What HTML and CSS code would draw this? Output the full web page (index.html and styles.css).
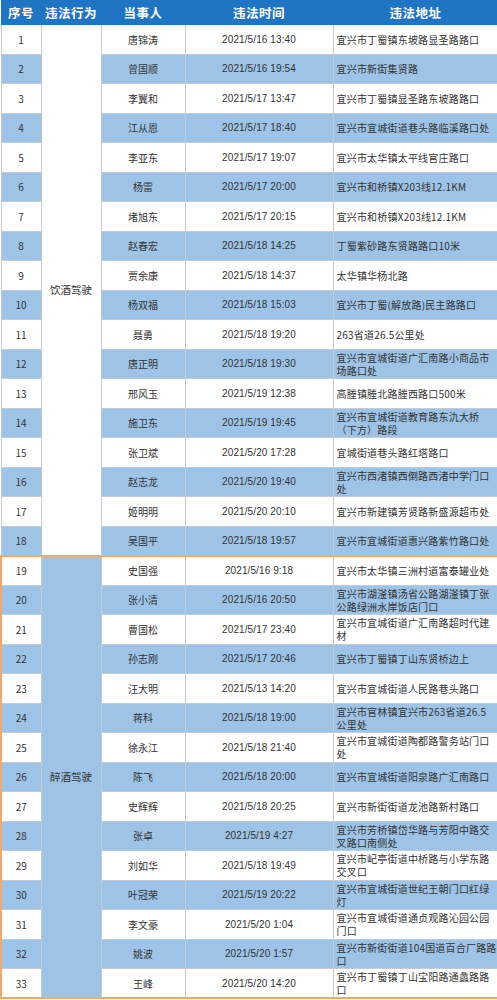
FILE: index.html
```html
<!DOCTYPE html>
<html lang="zh-CN">
<head>
<meta charset="utf-8">
<title>违法人员名单</title>
<link rel="stylesheet" href="styles.css">
</head>
<body>
<table class="sheet">
  <colgroup>
    <col class="c-no"><col class="c-type"><col class="c-name"><col class="c-time"><col class="c-addr">
  </colgroup>
  <thead>
    <tr class="head"><th>序号</th><th>违法行为</th><th>当事人</th><th>违法时间</th><th>违法地址</th></tr>
  </thead>
  <tbody class="group g1">
    <tr class="w"><td>1</td><td class="type" rowspan="18">饮酒驾驶</td><td>唐锦涛</td><td class="time">2021/5/16 13:40</td><td class="addr">宜兴市丁蜀镇东坡路显圣路路口</td></tr>
    <tr class="b"><td>2</td><td>曾国顺</td><td class="time">2021/5/16 19:54</td><td class="addr">宜兴市新街集贤路</td></tr>
    <tr class="w"><td>3</td><td>李翼和</td><td class="time">2021/5/17 13:47</td><td class="addr">宜兴市丁蜀镇显圣路东坡路路口</td></tr>
    <tr class="b"><td>4</td><td>江从恩</td><td class="time">2021/5/17 18:40</td><td class="addr">宜兴市宜城街道巷头路临溪路口处</td></tr>
    <tr class="w"><td>5</td><td>李亚东</td><td class="time">2021/5/17 19:07</td><td class="addr">宜兴市太华镇太平线官庄路口</td></tr>
    <tr class="b"><td>6</td><td>杨雷</td><td class="time">2021/5/17 20:00</td><td class="addr">宜兴市和桥镇X203线12.1KM</td></tr>
    <tr class="w"><td>7</td><td>堵旭东</td><td class="time">2021/5/17 20:15</td><td class="addr">宜兴市和桥镇X203线12.1KM</td></tr>
    <tr class="b"><td>8</td><td>赵春宏</td><td class="time">2021/5/18 14:25</td><td class="addr">丁蜀紫砂路东贤路路口10米</td></tr>
    <tr class="w"><td>9</td><td>贾余康</td><td class="time">2021/5/18 14:37</td><td class="addr">太华镇华杨北路</td></tr>
    <tr class="b"><td>10</td><td>杨双福</td><td class="time">2021/5/18 15:03</td><td class="addr">宜兴市丁蜀(解放路)民主路路口</td></tr>
    <tr class="w"><td>11</td><td>聂勇</td><td class="time">2021/5/18 19:20</td><td class="addr">263省道26.5公里处</td></tr>
    <tr class="b"><td>12</td><td>唐正明</td><td class="time">2021/5/18 19:30</td><td class="addr">宜兴市宜城街道广汇南路小商品市<br>场路口处</td></tr>
    <tr class="w"><td>13</td><td>邢风玉</td><td class="time">2021/5/19 12:38</td><td class="addr">高塍镇塍北路塍西路口500米</td></tr>
    <tr class="b"><td>14</td><td>施卫东</td><td class="time">2021/5/19 19:45</td><td class="addr">宜兴市宜城街道教育路东氿大桥<br>（下方）路段</td></tr>
    <tr class="w"><td>15</td><td>张卫斌</td><td class="time">2021/5/20 17:28</td><td class="addr">宜城街道巷头路红塔路口</td></tr>
    <tr class="b"><td>16</td><td>赵志龙</td><td class="time">2021/5/20 19:40</td><td class="addr">宜兴市西渚镇西倒路西渚中学门口<br>处</td></tr>
    <tr class="w"><td>17</td><td>姬明明</td><td class="time">2021/5/20 20:10</td><td class="addr">宜兴市新建镇芳贤路新盛源超市处</td></tr>
    <tr class="b"><td>18</td><td>吴国平</td><td class="time">2021/5/18 19:57</td><td class="addr">宜兴市宜城街道惠兴路紫竹路口处</td></tr>
  </tbody>
  <tbody class="group g2">
    <tr class="w"><td>19</td><td class="type" rowspan="15">醉酒驾驶</td><td>史国强</td><td class="time">2021/5/16 9:18</td><td class="addr">宜兴市太华镇三洲村道富泰罐业处</td></tr>
    <tr class="b"><td>20</td><td>张小清</td><td class="time">2021/5/16 20:50</td><td class="addr">宜兴市湖滏镇汤省公路湖滏镇丁张<br>公路绿洲水岸饭店门口</td></tr>
    <tr class="w"><td>21</td><td>曹国松</td><td class="time">2021/5/17 23:40</td><td class="addr">宜兴市宜城街道广汇南路超时代建<br>材</td></tr>
    <tr class="b"><td>22</td><td>孙志刚</td><td class="time">2021/5/17 20:46</td><td class="addr">宜兴市丁蜀镇丁山东贤桥边上</td></tr>
    <tr class="w"><td>23</td><td>汪大明</td><td class="time">2021/5/13 14:20</td><td class="addr">宜兴市宜城街道人民路巷头路口</td></tr>
    <tr class="b"><td>24</td><td>蒋科</td><td class="time">2021/5/18 19:00</td><td class="addr">宜兴市官林镇宜兴市263省道26.5<br>公里处</td></tr>
    <tr class="w"><td>25</td><td>徐永江</td><td class="time">2021/5/18 21:40</td><td class="addr">宜兴市宜城街道陶都路警务站门口<br>处</td></tr>
    <tr class="b"><td>26</td><td>陈飞</td><td class="time">2021/5/18 20:00</td><td class="addr">宜兴市宜城街道阳泉路广汇南路口</td></tr>
    <tr class="w"><td>27</td><td>史辉辉</td><td class="time">2021/5/18 20:25</td><td class="addr">宜兴市新街街道龙池路新村路口</td></tr>
    <tr class="b"><td>28</td><td>张卓</td><td class="time">2021/5/19 4:27</td><td class="addr">宜兴市芳桥镇岱华路与芳阳中路交<br>叉路口南侧处</td></tr>
    <tr class="w"><td>29</td><td>刘如华</td><td class="time">2021/5/18 19:49</td><td class="addr">宜兴市屺亭街道中桥路与小学东路<br>交叉口</td></tr>
    <tr class="b"><td>30</td><td>叶冠荣</td><td class="time">2021/5/19 20:22</td><td class="addr">宜兴市宜城街道世纪王朝门口红绿<br>灯</td></tr>
    <tr class="w"><td>31</td><td>李文豪</td><td class="time">2021/5/20 1:04</td><td class="addr">宜兴市宜城街道通贞观路沁园公园<br>门口</td></tr>
    <tr class="b"><td>32</td><td>姚波</td><td class="time">2021/5/20 1:57</td><td class="addr">宜兴市新街街道104国道百合厂路路<br>口</td></tr>
    <tr class="w"><td>33</td><td>王峰</td><td class="time">2021/5/20 14:20</td><td class="addr">宜兴市丁蜀镇丁山宝阳路通蠡路路<br>口</td></tr>
  </tbody>
</table>
</body>
</html>
```
FILE: styles.css
```css
html, body {
  margin: 0;
  padding: 0;
  background: #ffffff;
}

.sheet {
  width: 497px;
  table-layout: fixed;
  border-collapse: collapse;
  font-family: "Noto Sans CJK SC", "Liberation Sans", sans-serif;
  font-size: 10px;
  color: #333333;
}

.c-no { width: 40px; }
.c-type { width: 60px; }
.c-name { width: 84px; }
.c-time { width: 148px; }
.c-addr { width: 165px; }

.head {
  height: 24px;
  background: #1f74c4;
}

.head th {
  color: #ffffff;
  font-size: 12.5px;
  font-weight: 700;
  letter-spacing: 0.5px;
  padding: 0;
  border: 1px solid #1f74c4;
  text-align: center;
  vertical-align: middle;
}

.group tr {
  height: 29.5px;
}

.group td {
  border: 1px solid #c3ccd6;
  padding: 0;
  text-align: center;
  vertical-align: middle;
  line-height: 13px;
  white-space: nowrap;
  overflow: hidden;
}

.group tr.b td {
  background: #9dc3e6;
}

.group tr.w td {
  background: #ffffff;
}

.g1 {
  border: 1px solid #a8b4bf;
}

.g2 {
  border: 2px solid #eeaa70;
}

.g1 td.type {
  background: #ffffff !important;
  font-size: 10.5px;
}

.g2 td.type {
  background: #9dc3e6 !important;
  font-size: 10.5px;
}

td.time {
  font-family: "Liberation Sans", sans-serif;
  font-size: 10px;
  letter-spacing: 0.1px;
}

td.addr {
  text-align: left;
  padding-left: 3px;
  letter-spacing: 0.2px;
}
```
